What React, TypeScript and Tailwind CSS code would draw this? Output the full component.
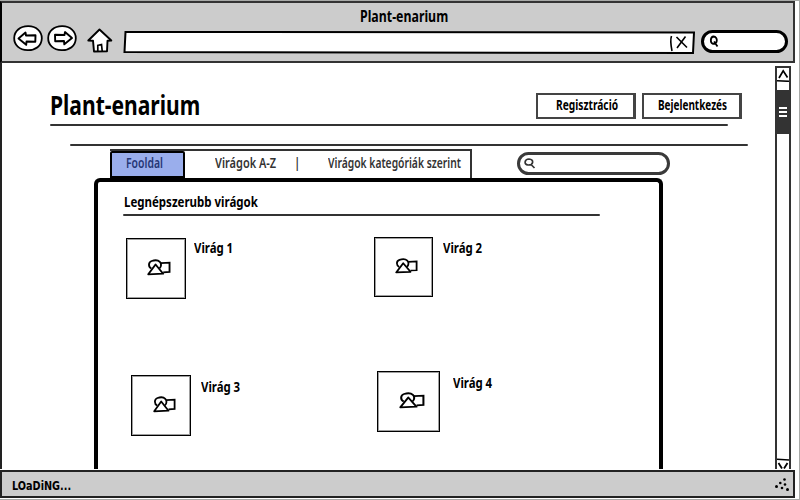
import { useLayoutEffect, useRef, useState } from "react";

type FitProps = { text: string; width: number; className?: string };

/* Condensed label: the text is squeezed horizontally to fill the given width. */
function Fit({ text, width, className = "" }: FitProps) {
  const ref = useRef<HTMLSpanElement>(null);
  const [scale, setScale] = useState(1);
  useLayoutEffect(() => {
    if (ref.current) setScale(width / ref.current.offsetWidth);
  }, [width, text]);
  return (
    <span className={`block shrink-0 whitespace-nowrap ${className}`} style={{ width }}>
      <span ref={ref} className="inline-block origin-left" style={{ transform: `scaleX(${scale})` }}>
        {text}
      </span>
    </span>
  );
}

function Arrow({ flip = false }: { flip?: boolean }) {
  return (
    <svg width="30" height="27" viewBox="0 0 30 27" className="shrink-0">
      <path d="M15 1.200C23 1 29 6.500 28.800 13.500C28.500 21 22.500 25.500 14.500 25.200C6.500 25 1 20 1.200 13C1.400 6 7 1.400 15 1.200Z" fill="#fff" stroke="#000" strokeWidth="1.800" />
      <path
        transform={flip ? "translate(30.500 -.5) scale(-1 1)" : undefined}
        d="M5.500 13.500L12.500 7.500L13 10.500L22.500 10.200L22.300 16.800L13.500 16.500L13.200 19.800Z"
        fill="#fff" stroke="#000" strokeWidth="1.900" strokeLinejoin="round"
      />
    </svg>
  );
}

function Home() {
  return (
    <svg width="26" height="25" viewBox="0 0 26 25" className="shrink-0">
      <path d="M12.500 1.500L24.300 12.500L20.500 12.700L20 23.200L7 23.500L6 12.700L1.300 12.500Z" fill="#fff" stroke="#000" strokeWidth="1.900" strokeLinejoin="round" />
      <path d="M10.800 23V17.500L14.500 16.500L15.200 23" fill="none" stroke="#000" strokeWidth="1.700" />
    </svg>
  );
}

/* Picture placeholder: circle, square and triangle. */
function Shapes({ className = "" }: { className?: string }) {
  return (
    <svg viewBox="0 0 23 17" preserveAspectRatio="none" className={className}>
      <path d="M13.300 4.200L21.600 3.600V13L15.500 13.300" fill="#fff" stroke="#000" strokeWidth="1.800" />
      <path d="M4.200 9.500C1.200 8 1 3.200 4.500 2C7 1.100 10.500 1 12.300 2.800C14 4.500 13.700 8 12 9.300" fill="none" stroke="#000" strokeWidth="1.800" />
      <path d="M8.200 5.500L15.500 14.700L1.200 15.300Z" fill="#fff" stroke="#000" strokeWidth="1.800" strokeLinejoin="round" />
    </svg>
  );
}

function Button({ text, width }: { text: string; width: number }) {
  return (
    <div className="flex h-[26px] w-[100px] justify-center border-2 border-r-[3px] border-[#444] bg-white pt-px pl-[2px]">
      <Fit text={text} width={width} className="text-[14px] leading-[18px]" />
    </div>
  );
}

function Card({ label, box, gap, icon }: { label: string; box: string; gap: string; icon: string }) {
  return (
    <div className="flex items-start">
      <div className={`flex shrink-0 border border-black bg-white shadow-[inset_0_0_0_1px_#00000060] ${box}`}>
        <Shapes className={icon} />
      </div>
      <Fit text={label} width={39} className={`text-[14px] leading-[20px] ${gap}`} />
    </div>
  );
}

export default function App() {
  return (
    <div className="flex h-[500px] w-[800px] flex-col overflow-hidden border-r border-b border-t border-[#a8aaa8] bg-white font-['Noto_Sans','Open_Sans',sans-serif] font-bold text-black">
      <header className="h-[62px] w-[795px] shrink-0 border-2 border-[#333] border-l-black bg-[#ccc]">
        <div className="flex h-[25px] pt-[3px] pl-[358px]">
          <Fit text="Plant-enarium" width={88} className="text-[16px] leading-[20px]" />
        </div>
        <div className="flex h-[28px] items-start pl-[11px]">
          <div className="-mt-[3px] flex gap-[4px]">
            <Arrow />
            <Arrow flip />
          </div>
          <div className="ml-[10px]"><Home /></div>
          <svg width="572" height="24" viewBox="0 0 572 24" className="mt-[2px] ml-[10px] shrink-0">
            <path d="M2.500 2L571 2.500L570 23L1.500 22Z" fill="#fff" stroke="#000" strokeWidth="2" />
            <path d="M548.500 6C547 10 548 16 549 21" fill="none" stroke="#000" strokeWidth="1.600" />
            <path d="M553.500 7L564 17.500M562.500 6.500L554 18" stroke="#000" strokeWidth="1.600" />
          </svg>
          <div className="mt-[2px] ml-[6px] flex h-[23px] w-[87px] shrink-0 items-center rounded-full border-[3px] border-black bg-white pl-[4px]">
            <svg width="13" height="13" viewBox="0 0 13 13">
              <path d="M5.500 1.500C2.300 1.700 1.800 8 5 8.800C9.500 9.500 10.500 2 5.500 1.500ZM6 6.500L9.500 11.500" fill="none" stroke="#000" strokeWidth="1.800" />
            </svg>
          </div>
        </div>
      </header>

      <main className="flex h-[406px] shrink-0 border-l-2 border-[#222] bg-white">
        <div className="w-[773px] shrink-0">
          <div className="ml-[48px] flex h-[62px] w-[692px] items-start justify-between">
            <Fit text="Plant-enarium" width={150} className="mt-[23px] text-[27.500px] leading-[38px]" />
            <div className="mt-[30px] flex gap-[6px]">
              <Button text="Regisztráció" width={62} />
              <Button text="Bejelentkezés" width={69} />
            </div>
          </div>
          <div className="-mt-px ml-[48px] h-[2px] w-[678px] rounded-full bg-[#333]" />
          <div className="mt-[18px] ml-[68px] h-[2px] w-[678px] rounded-full bg-[#333]" />
          <div className="mt-[3px] ml-[108px] flex h-[29px] items-start">
            <nav className="flex h-[29px] w-[362px] border-t-2 border-r-2 border-[#333] text-[13.500px] leading-[18px] font-semibold text-[#333]">
              <div className="h-[27px] w-[75px] rounded-t-[2px] border-2 border-black bg-[#9aaeec] pl-[14px] text-[#263775]">
                <Fit text="Fooldal" width={37} className="mt-px" />
              </div>
              <Fit text="Virágok A-Z" width={61} className="mt-[3px] ml-[30px]" />
              <Fit text="|" width={6} className="mt-[3px] ml-[18px]" />
              <Fit text="Virágok kategóriák szerint" width={133} className="mt-[3px] ml-[28px]" />
            </nav>
            <div className="mt-[3px] ml-[45px] flex h-[23px] w-[153px] items-center rounded-full border-[3px] border-[#3a3a3a] bg-white pl-[3px]">
              <svg width="13" height="11" viewBox="0 0 13 11">
                <path d="M6 1C1.500 1 .5 6.500 5 7C10.500 7.300 11.500 1.500 6 1ZM7.500 6L11.500 10" fill="none" stroke="#333" strokeWidth="1.700" />
              </svg>
            </div>
          </div>

          <section className="ml-[92px] h-[291px] w-[569px] rounded-t-[6px] border-4 border-b-0 border-black bg-white">
            <Fit text="Legnépszerubb virágok" width={134} className="mt-[9px] ml-[26px] text-[15px] leading-[20px]" />
            <div className="mt-[3px] ml-[25px] h-[2px] w-[477px] rounded-full bg-[#333]" />
            <div className="mt-[22px] flex h-[134px] items-start pl-[28px]">
              <Card label="Virág 1" box="h-[61px] w-[60px]" gap="ml-[8px]" icon="mt-[20px] ml-[20px] h-[17px] w-[24px]" />
              <div className="-mt-px ml-[141px]">
                <Card label="Virág 2" box="h-[60px] w-[59px]" gap="ml-[10px] mt-px" icon="mt-[20px] ml-[20px] h-[16px] w-[23px]" />
              </div>
            </div>
            <div className="flex items-start pl-[33px]">
              <div className="mt-[3px]">
                <Card label="Virág 3" box="h-[61px] w-[60px]" gap="ml-[10px] mt-[2px]" icon="mt-[20px] ml-[21px] h-[17px] w-[23px]" />
              </div>
              <div className="-mt-px ml-[137px]">
                <Card label="Virág 4" box="h-[61px] w-[63px]" gap="ml-[13px] mt-[2px]" icon="mt-[20px] ml-[21px] h-[17px] w-[26px]" />
              </div>
            </div>
          </section>
        </div>

        <aside className="mt-[3px] flex h-[403px] w-[16px] shrink-0 flex-col border-x-2 border-t-2 border-[#333] bg-white">
          <svg width="12" height="14" viewBox="0 0 12 14">
            <path d="M2 10L6.200 2.800L10.500 9.500" fill="none" stroke="#000" strokeWidth="1.700" />
            <path d="M0 12.700L12 13.300" stroke="#000" strokeWidth="1.600" />
          </svg>
          <div className="mt-[8px] flex h-[44px] flex-col items-center justify-center gap-[2px] bg-[#333]">
            <i className="h-[2px] w-[8px] bg-white" />
            <i className="h-[2px] w-[8px] bg-white" />
            <i className="h-[2px] w-[8px] bg-white" />
          </div>
          <svg width="12" height="11" viewBox="0 0 12 11" className="mt-auto">
            <path d="M0 1.200L12 2" stroke="#000" strokeWidth="1.600" />
            <path d="M1.500 5L5 10.500M10.500 5L7 10.500" stroke="#000" strokeWidth="1.800" />
          </svg>
        </aside>
      </main>

      <footer className="mt-px flex h-[28px] w-[795px] shrink-0 justify-between border-2 border-[#222] bg-[#ccc]">
        <Fit text="LOaDiNG..." width={59} className="mt-[6px] ml-[10px] font-['DejaVu_Sans',sans-serif] text-[11.500px] leading-[16px] font-bold" />
        <svg width="16" height="16" viewBox="0 0 16 16" className="mt-[5px] mr-[3px]">
          <g fill="#000">
            <circle cx="10.500" cy="2.500" r="1.300" />
            <circle cx="6.300" cy="6" r="1.300" />
            <circle cx="11" cy="7.500" r="1.300" />
            <circle cx="2.500" cy="9.500" r="1.500" />
            <circle cx="8" cy="11" r="1.300" />
            <circle cx="13.500" cy="12.500" r="1.500" />
          </g>
        </svg>
      </footer>
    </div>
  );
}
